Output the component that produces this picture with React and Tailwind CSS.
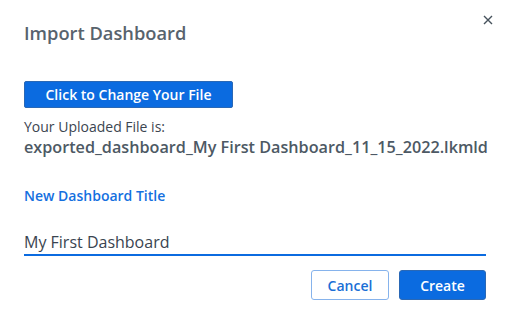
import React, { useState } from 'react';

const ImportDashboardDialog = () => {
  const [titulo, setTitulo] = useState('My First Dashboard');

  return (
    <div className="w-[510px] h-[309px] bg-white rounded-lg relative font-['Open_Sans',sans-serif] px-6 pt-[20px]">
      <button className="absolute top-[14px] right-[16px] text-[#46525c]">
        <svg width="12" height="12" viewBox="0 0 12 12" fill="none" stroke="currentColor" strokeWidth="1.4">
          <path d="M2 2L10 10M10 2L2 10" />
        </svg>
      </button>

      <h2 className="text-[18.3px] font-semibold text-[#58636d] leading-[26px]">Import Dashboard</h2>

      <button className="mt-[35px] h-[27px] w-[209px] bg-[#0b6be0] border border-[#2a68b5] rounded-[2px] text-white text-[14px] font-semibold">
        Click to Change Your File
      </button>

      <p className="mt-[9px] text-[14px] text-[#3b4550] leading-[20px]">Your Uploaded File is:</p>
      <p className="text-[16.2px] font-semibold text-[#4d5964] leading-[20px] whitespace-nowrap">
        exported_dashboard_My First Dashboard_11_15_2022.lkmld
      </p>

      <label className="block mt-[29px] text-[14px] font-semibold text-[#1470df] leading-[20px]">New Dashboard Title</label>

      <div className="relative mt-[24px]">
        <input
          value={titulo}
          onChange={(e) => setTitulo(e.target.value)}
          className="w-full h-[26px] border-b-2 border-[#0b6be0] text-[16px] text-[#3a4450] outline-none caret-black"
          autoFocus
        />
      </div>

      <div className="flex justify-end gap-[10px] mt-[14px]">
        <button className="w-[78px] h-[30px] border border-[#86b3ec] rounded-[3px] text-[14px] font-semibold text-[#1a6fd6]">
          Cancel
        </button>
        <button className="w-[87px] h-[30px] bg-[#0b6be0] border border-[#2a68b5] rounded-[3px] text-[14px] font-semibold text-white">
          Create
        </button>
      </div>
    </div>
  );
};

export default ImportDashboardDialog;
